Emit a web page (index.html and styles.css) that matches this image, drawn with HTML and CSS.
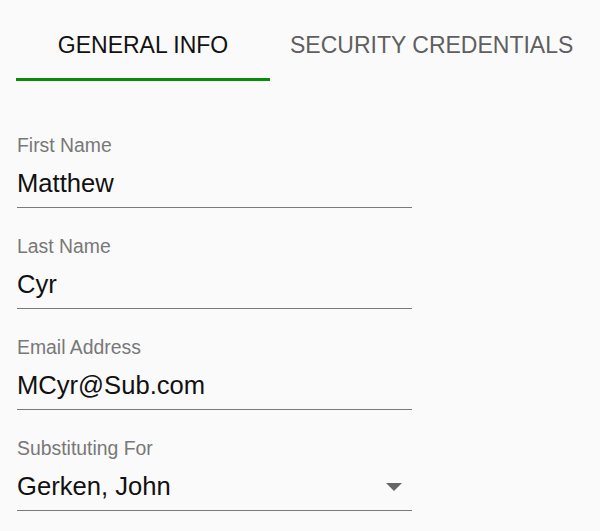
FILE: index.html
```html
<!DOCTYPE html>
<html>
<head>
<meta charset="utf-8">
<link rel="stylesheet" href="styles.css">
</head>
<body>
<div class="tabs">
  <div class="tab active">GENERAL INFO</div>
  <div class="tab">SECURITY CREDENTIALS</div>
</div>
<div class="form">
  <div class="field">
    <div class="label">First Name</div>
    <div class="value">Matthew</div>
  </div>
  <div class="field">
    <div class="label">Last Name</div>
    <div class="value">Cyr</div>
  </div>
  <div class="field">
    <div class="label">Email Address</div>
    <div class="value">MCyr@Sub.com</div>
  </div>
  <div class="field">
    <div class="label">Substituting For</div>
    <div class="value select">
      <span>Gerken, John</span>
      <svg class="caret" width="16" height="8" viewBox="0 0 16 8"><path d="M0 0 L16 0 L8 8 Z" fill="#666"/></svg>
    </div>
  </div>
</div>
</body>
</html>
```
FILE: styles.css
```css
html, body {
  margin: 0;
  padding: 0;
  background: #fafafa;
  font-family: "Liberation Sans", Arial, sans-serif;
}
.tabs {
  display: flex;
  padding-left: 16px;
}
.tab {
  min-width: 254px;
  box-sizing: border-box;
  padding: 32px 20px 20px;
  font-size: 23px;
  line-height: 26px;
  text-align: center;
  color: #5f5f5f;
  border-bottom: 3px solid transparent;
  white-space: nowrap;
}
.tab.active {
  color: #111;
  border-bottom-color: #0b8a0b;
}
.form {
  padding: 53px 0 0 17px;
  width: 395px;
}
.field {
  border-bottom: 1px solid #7a7a7a;
  margin-bottom: 27px;
}
.label {
  font-size: 19.4px;
  line-height: 22px;
  color: #787878;
}
.value {
  margin-top: 12px;
  padding-bottom: 9px;
  font-size: 25.6px;
  line-height: 30px;
  color: #111;
}
.select {
  display: flex;
  align-items: center;
  justify-content: space-between;
  padding-right: 10px;
}
.caret {
  margin-top: 2px;
}
```
